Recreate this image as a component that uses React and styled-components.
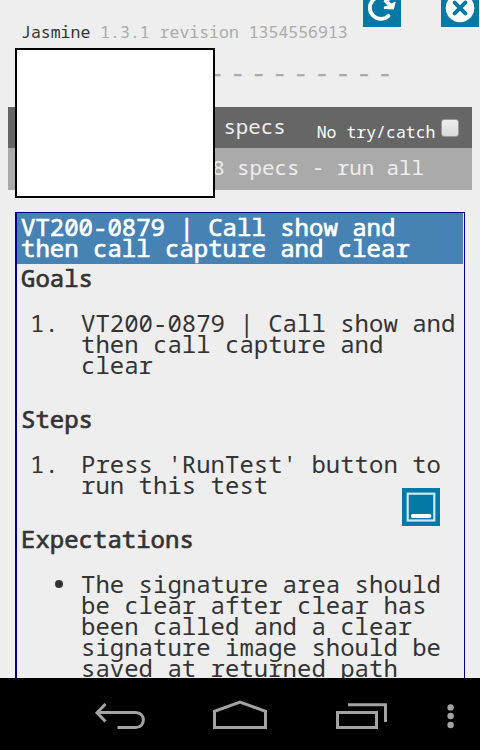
import React from 'react';
import styled, { createGlobalStyle } from 'styled-components';

const GlobalStyle = createGlobalStyle`
  * { box-sizing: border-box; }
  html, body { margin: 0; padding: 0; overflow: hidden; background: #eee; }
  body { font-family: "Noto Sans Mono", "DejaVu Sans Mono", monospace; color: #333; }
`;

const Screen = styled.div`
  position: relative;
  width: 480px;
  height: 750px;
  display: flex;
  flex-direction: column;
  overflow: hidden;
`;

const Page = styled.main`
  height: 678px;
  flex: none;
  overflow: hidden;
  padding: 22px 8px 0;
  background: #eee;
`;

const Banner = styled.header`
  height: 20px;
  padding-left: 13px;
  font-size: 16.5px;
  line-height: 20px;
  white-space: pre;
  color: #aaa;
`;

const Product = styled.span`
  color: #333;
`;

const Symbols = styled.ul`
  display: grid;
  grid-template-columns: repeat(18, 21.05px);
  height: 20px;
  margin: 20px 0 25px;
  padding: 0 0 0 12px;
  list-style: none;
  line-height: 20px;
  font-size: 24px;
  color: #aaa;
  -webkit-text-stroke: 0.3px #aaa;
`;

const Symbol = styled.li`
  overflow: visible;
`;

const Bar = styled.div`
  display: flex;
  align-items: center;
  justify-content: flex-end;
  height: ${(p) => (p.$tall ? 42 : 41)}px;
  padding-right: ${(p) => p.$right}px;
  padding-bottom: 4px;
  background: ${(p) => p.$bg};
  color: #eee;
  font-size: 20.8px;
  letter-spacing: -0.02px;
  white-space: pre;
`;

const TryCatch = styled.label`
  display: flex;
  align-items: center;
  gap: 5px;
  margin-left: 31px;
  color: #fff;
  font-size: 16.5px;
  letter-spacing: 0;
`;

const TryText = styled.span`
  padding-top: 11px;
`;

const Checkbox = styled.span`
  width: 18px;
  height: 18px;
  margin-top: 4px;
  border: 1px solid #999;
  border-radius: 3px;
  background: linear-gradient(#eee, #d9d9d9);
`;

const Spec = styled.section`
  width: 450px;
  height: 600px;
  margin: 22px 0 0 7px;
  border: solid #00008b;
  border-width: 1px 1px 1px 2px;
  font-size: 24px;
  line-height: 21px;
`;

const Title = styled.h1`
  margin: 0 1px 0 0;
  height: 51px;
  padding: 3px 0 0 4px;
  background: #4682b4;
  color: #fff;
  font-size: inherit;
  font-weight: 400;
  -webkit-text-stroke: 0.7px currentColor;
`;

const Heading = styled.h2`
  margin: ${(p) => (p.$first ? 3 : 33)}px 0 24px 4px;
  font-size: inherit;
  font-weight: 400;
  -webkit-text-stroke: 0.7px currentColor;
`;

const Item = styled.div`
  display: grid;
  grid-template-columns: 51px 1fr;
  padding-left: 13px;
  white-space: pre;
`;

const Bullet = styled.span`
  width: 8px;
  height: 8px;
  margin: 7px 0 0 25px;
  border-radius: 50%;
  background: #333;
`;

const Signature = styled.div`
  position: absolute;
  left: 15px;
  top: 48px;
  width: 200px;
  height: 150px;
  border: 2px solid #000;
  background: #fff;
`;

const Floating = styled.button`
  position: absolute;
  left: ${(p) => p.$x}px;
  top: ${(p) => p.$y}px;
  width: 38px;
  height: 38px;
  padding: 0;
  border: 0;
  background: #0479a5;
  svg { display: block; }
`;

const NavBar = styled.nav`
  flex: 1;
  display: grid;
  grid-template-columns: 60px 120px 120px 120px 60px;
  padding-top: 20px;
  background: #000;
  svg { display: block; }
`;

const NavSlot = styled.div`
  display: flex;
  justify-content: center;
`;

const goals = 'VT200-0879 | Call show and\nthen call capture and\nclear';
const steps = "Press 'RunTest' button to\nrun this test";
const expectation =
  'The signature area should\nbe clear after clear has\nbeen called and a clear\nsignature image should be\nsaved at returned path';

export default function App() {
  return (
    <>
      <GlobalStyle />
      <Screen>
        <Page>
          <Banner><Product>Jasmine</Product> 1.3.1 revision 1354556913</Banner>
          <Symbols>
            {Array.from({ length: 18 }, (_, i) => <Symbol key={i}>-</Symbol>)}
          </Symbols>
          <Bar $bg="#666" $right={13.5}>
            specs
            <TryCatch>
              <TryText>No try/catch</TryText>
              <Checkbox />
            </TryCatch>
          </Bar>
          <Bar $bg="#aaa" $tall $right={48}>8 specs - run all</Bar>
          <Spec>
            <Title>VT200-0879 | Call show and<br />then call capture and clear</Title>
            <Heading $first>Goals</Heading>
            <Item><span>1.</span><span>{goals}</span></Item>
            <Heading>Steps</Heading>
            <Item><span>1.</span><span>{steps}</span></Item>
            <Heading>Expectations</Heading>
            <Item><Bullet /><span>{expectation}</span></Item>
          </Spec>
        </Page>
        <NavBar>
          <NavSlot />
          <NavSlot>
            <svg width="120" height="40" viewBox="60 698 120 40" fill="none" stroke="#a3a3a3" strokeWidth="3">
              <path d="M105.5 704 L97 712.7 L105.5 721.5" />
              <path d="M98 712.5 H135.5 C146 712.5 146 727.5 135.5 727.5 H117.5" />
            </svg>
          </NavSlot>
          <NavSlot>
            <svg width="120" height="40" viewBox="180 698 120 40" fill="none" stroke="#a3a3a3" strokeWidth="3">
              <path d="M214.5 727.5 V711.3 L240 702 L265.5 711.3 V727.5 Z" />
            </svg>
          </NavSlot>
          <NavSlot>
            <svg width="120" height="40" viewBox="300 698 120 40" fill="none" stroke="#a3a3a3" strokeWidth="3">
              <path d="M337.5 712.5 H376.5 V727.5 H337.5 Z M348 704.8 H385.5 V722" />
            </svg>
          </NavSlot>
          <NavSlot>
            <svg width="60" height="40" viewBox="420 698 60 40" fill="#a3a3a3">
              <circle cx="450.6" cy="707.4" r="3.2" />
              <circle cx="450.6" cy="716" r="3.2" />
              <circle cx="450.6" cy="725" r="3.2" />
            </svg>
          </NavSlot>
        </NavBar>
        <Signature />
        <Floating $x={363} $y={-11} aria-label="Refresh">
          <svg width="38" height="38" viewBox="363 -11 38 38" fill="none">
            <path d="M388 -0.5 A11 11 0 1 0 388.4 15.8" stroke="#fff" strokeWidth="3.8" strokeLinecap="round" />
            <path d="M386 -2 L391 3.4 L395.8 1.6 L393.8 9.6 L384 9 L383.8 6.8 L387.6 5.6 L383.5 1.5 Z" fill="#fff" />
          </svg>
        </Floating>
        <Floating $x={441} $y={-11} aria-label="Close">
          <svg width="38" height="38" viewBox="441 -11 38 38">
            <circle cx="460" cy="8" r="14.3" fill="#fff" />
            <path d="M454.7 2.7 L465.3 13.3 M465.3 2.7 L454.7 13.3" stroke="#0479a5" strokeWidth="4" strokeLinecap="round" />
          </svg>
        </Floating>
        <Floating $x={402} $y={488} aria-label="Dock">
          <svg width="38" height="38" viewBox="0 0 38 38" fill="none">
            <rect x="5.7" y="5.7" width="26.6" height="26.8" stroke="#cfe9f3" strokeWidth="2.2" />
            <path d="M10.8 28 H27.4" stroke="#fff" strokeWidth="4" strokeLinecap="round" />
          </svg>
        </Floating>
      </Screen>
    </>
  );
}
